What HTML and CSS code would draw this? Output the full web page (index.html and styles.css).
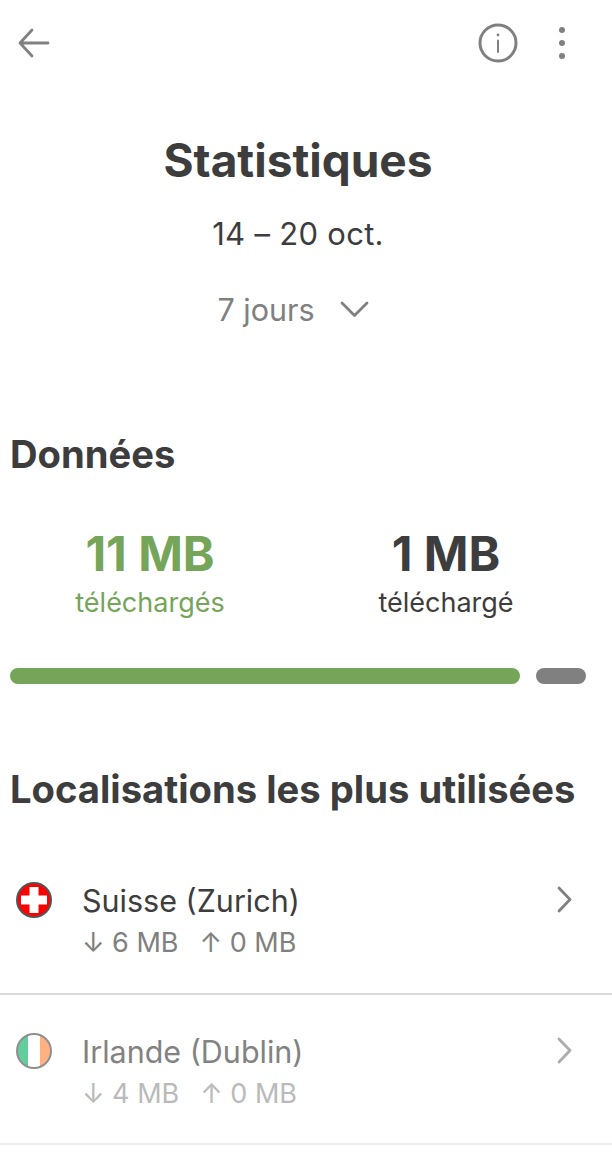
FILE: index.html
```html
<!DOCTYPE html>
<html lang="fr">
<head>
  <meta charset="UTF-8" />
  <meta name="viewport" content="width=device-width, initial-scale=1" />
  <title>Statistiques</title>
  <link rel="stylesheet" href="styles.css">
</head>
<body>
  <header class="topbar">
    <svg class="icon-back line" width="36" height="32" viewBox="0 0 36 32">
      <path d="M33 16H5M17 3L5 16l12 13" />
    </svg>
    <svg class="icon-info" width="40" height="40" viewBox="0 0 40 40">
      <circle cx="20" cy="20" r="18" />
      <path d="M20 17.5V29" />
      <circle class="dot" cx="20" cy="12" r="1.4" />
    </svg>
    <svg class="icon-more" width="10" height="34" viewBox="0 0 10 34">
      <circle cx="5" cy="4" r="3" />
      <circle cx="5" cy="17" r="3" />
      <circle cx="5" cy="30" r="3" />
    </svg>
  </header>

  <div class="intro">
    <h1>Statistiques</h1>
    <div class="dates">14 – 20 oct.</div>
    <div class="period">
      <span>7 jours</span>
      <svg class="line" width="30" height="18" viewBox="0 0 30 18"><path d="M2 2l12.5 12.5L27 2" /></svg>
    </div>
  </div>

  <section class="data">
    <h2>Données</h2>
    <div class="totals">
      <div class="total down">
        <div class="amount">11 MB</div>
        <div class="label">téléchargés</div>
      </div>
      <div class="total">
        <div class="amount">1 MB</div>
        <div class="label">téléchargé</div>
      </div>
    </div>
    <div class="bar">
      <div class="bar-down"></div>
      <div class="bar-up"></div>
    </div>
  </section>

  <section class="places">
    <h2>Localisations les plus utilisées</h2>
    <div class="place">
      <svg class="flag" width="38" height="38" viewBox="0 0 38 38">
        <circle cx="19" cy="19" r="17" fill="#f00" />
        <path d="M14.5 6h9v8.500H32v9h-8.500V32h-9v-8.500H6v-9h8.500z" fill="#fff" />
        <circle cx="19" cy="19" r="17" class="flag-ring" />
      </svg>
      <div class="place-text">
        <div class="place-name">Suisse (Zurich)</div>
        <div class="place-usage"><span>↓ 6 MB</span><span>↑ 0 MB</span></div>
      </div>
      <svg class="chevron line" width="20" height="30" viewBox="0 0 20 30"><path d="M3 3l11 11.500L3 26" /></svg>
    </div>
    <div class="place faded">
      <svg class="flag" width="38" height="38" viewBox="0 0 38 38">
        <path d="M2 19a17 17 0 0 1 11-16v32A17 17 0 0 1 2 19z" fill="#0fb566" />
        <path d="M25 3a17 17 0 0 1 0 32z" fill="#ff883e" />
        <circle cx="19" cy="19" r="17" class="flag-ring" />
      </svg>
      <div class="place-text">
        <div class="place-name">Irlande (Dublin)</div>
        <div class="place-usage"><span>↓ 4 MB</span><span>↑ 0 MB</span></div>
      </div>
      <svg class="chevron line" width="20" height="30" viewBox="0 0 20 30"><path d="M3 3l11 11.500L3 26" /></svg>
    </div>
  </section>
</body>
</html>
```

FILE: styles.css
```css
html, body {
  margin: 0;
  padding: 0;
}
body {
  font-family: 'Inter', sans-serif;
  background: #fff;
  color: #3d3d3d;
  width: 612px;
  height: 1169px;
  overflow: hidden;
}
.line path {
  fill: none;
  stroke: #808080;
  stroke-width: 2.8;
  stroke-linecap: round;
  stroke-linejoin: round;
}
.topbar {
  display: flex;
  align-items: center;
  height: 40px;
  padding: 23px 45px 0 15px;
}
.icon-back {
  margin-right: auto;
}
.icon-info {
  margin-right: 39px;
}
.icon-info circle {
  fill: none;
  stroke: #808080;
  stroke-width: 3;
}
.icon-info .dot {
  fill: #808080;
  stroke: none;
}
.icon-info path {
  fill: none;
  stroke: #808080;
  stroke-width: 2;
  stroke-linecap: round;
}
.icon-more circle {
  fill: #808080;
}
.intro {
  width: 596px;
  display: flex;
  flex-direction: column;
  align-items: center;
}
h1 {
  margin: 69px 0 0;
  font-size: 46px;
  line-height: 56px;
  font-weight: 700;
}
.dates {
  margin-top: 28px;
  font-size: 31px;
  line-height: 36px;
  letter-spacing: 0.3px;
}
.period {
  display: flex;
  align-items: center;
  gap: 25px;
  margin-top: 40px;
  font-size: 30.5px;
  line-height: 36px;
  color: #808080;
}
.period svg {
  margin-right: 9px;
}
h2 {
  margin: 0;
  font-size: 38.2px;
  line-height: 46px;
  font-weight: 700;
}
.data {
  margin-top: 103px;
  padding: 0 26px 0 10px;
}
.totals {
  display: flex;
  margin: 49px -8px 0;
}
.total {
  flex: 1;
  text-align: center;
}
.down {
  color: #75a558;
}
.amount {
  font-size: 48px;
  line-height: 56px;
  font-weight: 700;
}
.label {
  margin-top: 3px;
  font-size: 27px;
  line-height: 36px;
}
.bar {
  display: flex;
  gap: 16px;
  margin-top: 47px;
}
.bar-down,
.bar-up {
  height: 16px;
  border-radius: 8px;
}
.bar-down {
  flex: 1;
  background: #75a558;
}
.bar-up {
  width: 50px;
  background: #808080;
}
.places {
  margin-top: 82px;
}
.places h2 {
  padding-left: 10px;
  margin-bottom: 33px;
}
.place {
  display: flex;
  align-items: flex-start;
  height: 150px;
  box-sizing: border-box;
  border-bottom: 2px solid #d9d9d9;
  padding: 37px 36px 0 15px;
}
.flag {
  flex: none;
  margin-top: -1px;
}
.flag-ring {
  fill: none;
  stroke: #555;
  stroke-width: 2;
}
.place-text {
  flex: 1;
  margin-left: 29px;
}
.place-name {
  font-size: 30.5px;
  line-height: 38px;
}
.place-usage {
  display: flex;
  gap: 21px;
  margin-top: 5px;
  font-size: 27px;
  line-height: 36px;
  color: #808080;
}
.chevron {
  margin-top: 3px;
}
.faded {
  border-bottom-color: #eee;
  padding-top: 38px;
}
.faded .flag,
.faded .chevron {
  opacity: 0.65;
}
.faded .place-name {
  color: #828282;
}
.faded .place-usage {
  color: #bababa;
}
```
